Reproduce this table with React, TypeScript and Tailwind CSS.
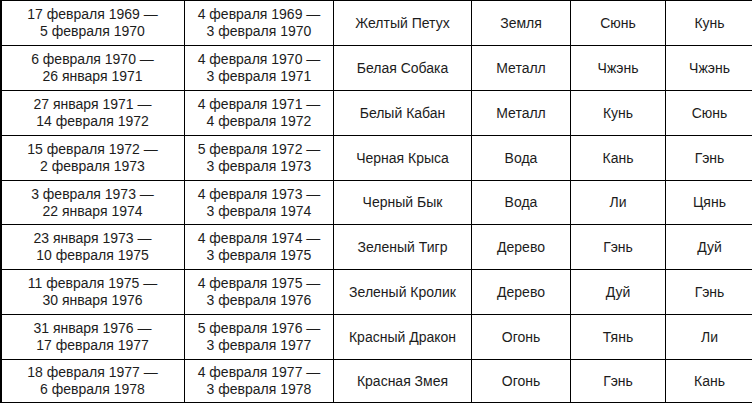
import React from "react";

const rows: [string, string, string, string, string, string, string, string][] = [
  ["17 февраля 1969 —", "5 февраля 1970", "4 февраля 1969 —", "3 февраля 1970", "Желтый Петух", "Земля", "Сюнь", "Кунь"],
  ["6 февраля 1970 —", "26 января 1971", "4 февраля 1970 —", "3 февраля 1971", "Белая Собака", "Металл", "Чжэнь", "Чжэнь"],
  ["27 января 1971 —", "14 февраля 1972", "4 февраля 1971 —", "4 февраля 1972", "Белый Кабан", "Металл", "Кунь", "Сюнь"],
  ["15 февраля 1972 —", "2 февраля 1973", "5 февраля 1972 —", "3 февраля 1973", "Черная Крыса", "Вода", "Кань", "Гэнь"],
  ["3 февраля 1973 —", "22 января 1974", "4 февраля 1973 —", "3 февраля 1974", "Черный Бык", "Вода", "Ли", "Цянь"],
  ["23 января 1973 —", "10 февраля 1975", "4 февраля 1974 —", "3 февраля 1975", "Зеленый Тигр", "Дерево", "Гэнь", "Дуй"],
  ["11 февраля 1975 —", "30 января 1976", "4 февраля 1975 —", "3 февраля 1976", "Зеленый Кролик", "Дерево", "Дуй", "Гэнь"],
  ["31 января 1976 —", "17 февраля 1977", "5 февраля 1976 —", "3 февраля 1977", "Красный Дракон", "Огонь", "Тянь", "Ли"],
  ["18 февраля 1977 —", "6 февраля 1978", "4 февраля 1977 —", "3 февраля 1978", "Красная Змея", "Огонь", "Гэнь", "Кань"],
];

const heights = ["h-[45px]", "h-[45px]", "h-[45px]", "h-[45px]", "h-[44px]", "h-[45px]", "h-[45px]", "h-[45px]", "h-[43px]"];

const cell = "border-r border-b border-black flex flex-col items-center justify-center text-center";

export default function App() {
  return (
    <div className="w-[752px] h-[404px] bg-white overflow-hidden">
      <div
        className="grid grid-cols-[183px_149px_138px_99px_95px_88px] border-t border-l-2 border-black w-[752px] text-[14px] leading-[17px] text-[#1c1c1c]"
        style={{ fontFamily: '"Liberation Sans", Arial, sans-serif' }}
      >
        {rows.map((r, i) => (
          <React.Fragment key={i}>
            <div className={`${cell} ${heights[i]} -ml-[1px]`}>
              <div>{r[0]}</div>
              <div>{r[1]}</div>
            </div>
            <div className={`${cell} ${heights[i]}`}>
              <div>{r[2]}</div>
              <div>{r[3]}</div>
            </div>
            <div className={`${cell} ${heights[i]}`}>{r[4]}</div>
            <div className={`${cell} ${heights[i]}`}>{r[5]}</div>
            <div className={`${cell} ${heights[i]}`}>{r[6]}</div>
            <div className={`${cell} ${heights[i]}`}>{r[7]}</div>
          </React.Fragment>
        ))}
      </div>
    </div>
  );
}
